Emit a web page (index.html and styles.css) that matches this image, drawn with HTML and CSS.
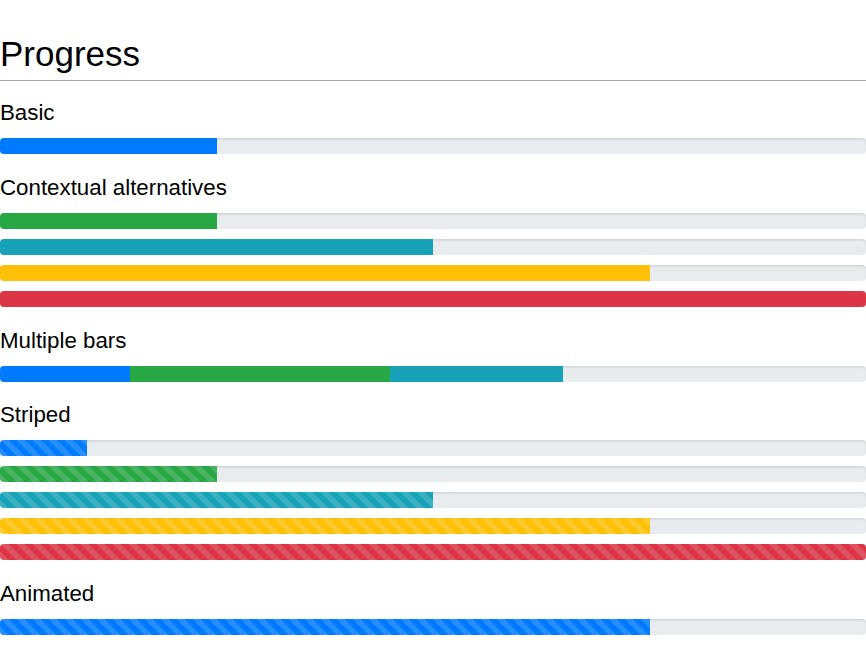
FILE: index.html
```html
<!DOCTYPE html>
<html lang="en">
<head>
    <meta charset="UTF-8">
    <title>Progress</title>
    <link rel="stylesheet" href="styles.css">
</head>
<body>
    <h2 class="page-title">Progress</h2>

    <h5 class="section-title first">Basic</h5>
    <div class="progress"><div class="bar bg-primary" style="width: 25%"></div></div>

    <h5 class="section-title">Contextual alternatives</h5>
    <div class="progress"><div class="bar bg-success" style="width: 25%"></div></div>
    <div class="progress"><div class="bar bg-info" style="width: 50%"></div></div>
    <div class="progress"><div class="bar bg-warning" style="width: 75%"></div></div>
    <div class="progress"><div class="bar bg-danger" style="width: 100%"></div></div>

    <h5 class="section-title">Multiple bars</h5>
    <div class="progress">
        <div class="bar bg-primary" style="width: 15%"></div>
        <div class="bar bg-success" style="width: 30%"></div>
        <div class="bar bg-info" style="width: 20%"></div>
    </div>

    <h5 class="section-title">Striped</h5>
    <div class="progress"><div class="bar striped bg-primary" style="width: 10%"></div></div>
    <div class="progress"><div class="bar striped bg-success" style="width: 25%"></div></div>
    <div class="progress"><div class="bar striped bg-info" style="width: 50%"></div></div>
    <div class="progress"><div class="bar striped bg-warning" style="width: 75%"></div></div>
    <div class="progress"><div class="bar striped bg-danger" style="width: 100%"></div></div>

    <h5 class="section-title">Animated</h5>
    <div class="progress"><div class="bar striped animated bg-primary" style="width: 75%"></div></div>
</body>
</html>
```

FILE: styles.css
```css
body {
    margin: 0;
    font-family: "Liberation Sans", Arial, sans-serif;
    color: #000;
    background: #fff;
}
.page-title {
    margin: 33px 0 0;
    padding-bottom: 6px;
    font-size: 35px;
    font-weight: normal;
    line-height: 41px;
    border-bottom: 1px solid #a3a7ab;
}
.section-title {
    margin: 20.8px 0 12px;
    font-size: 22.3px;
    font-weight: normal;
    line-height: 26px;
}
.section-title.first { margin-top: 19px; }

.progress {
    display: flex;
    height: 16px;
    margin-bottom: 10px;
    overflow: hidden;
    background: #e9ecef;
    border-radius: 4px;
    box-shadow: inset 0 1.6px 1.6px rgba(0, 0, 0, 0.1);
}
.progress:last-child { margin-bottom: 0; }
.bar { height: 100%; }
.bg-primary { background-color: #007bff; }
.bg-success { background-color: #28a745; }
.bg-info { background-color: #17a2b8; }
.bg-warning { background-color: #ffc107; }
.bg-danger { background-color: #dc3545; }

.striped {
    background-image: linear-gradient(45deg,
        rgba(255, 255, 255, 0.15) 25%, transparent 25%,
        transparent 50%, rgba(255, 255, 255, 0.15) 50%,
        rgba(255, 255, 255, 0.15) 75%, transparent 75%, transparent);
    background-size: 16px 16px;
}
.animated { animation: stripes 1s linear infinite; }
@keyframes stripes {
    from { background-position: 16px 0; }
    to { background-position: 0 0; }
}
```
